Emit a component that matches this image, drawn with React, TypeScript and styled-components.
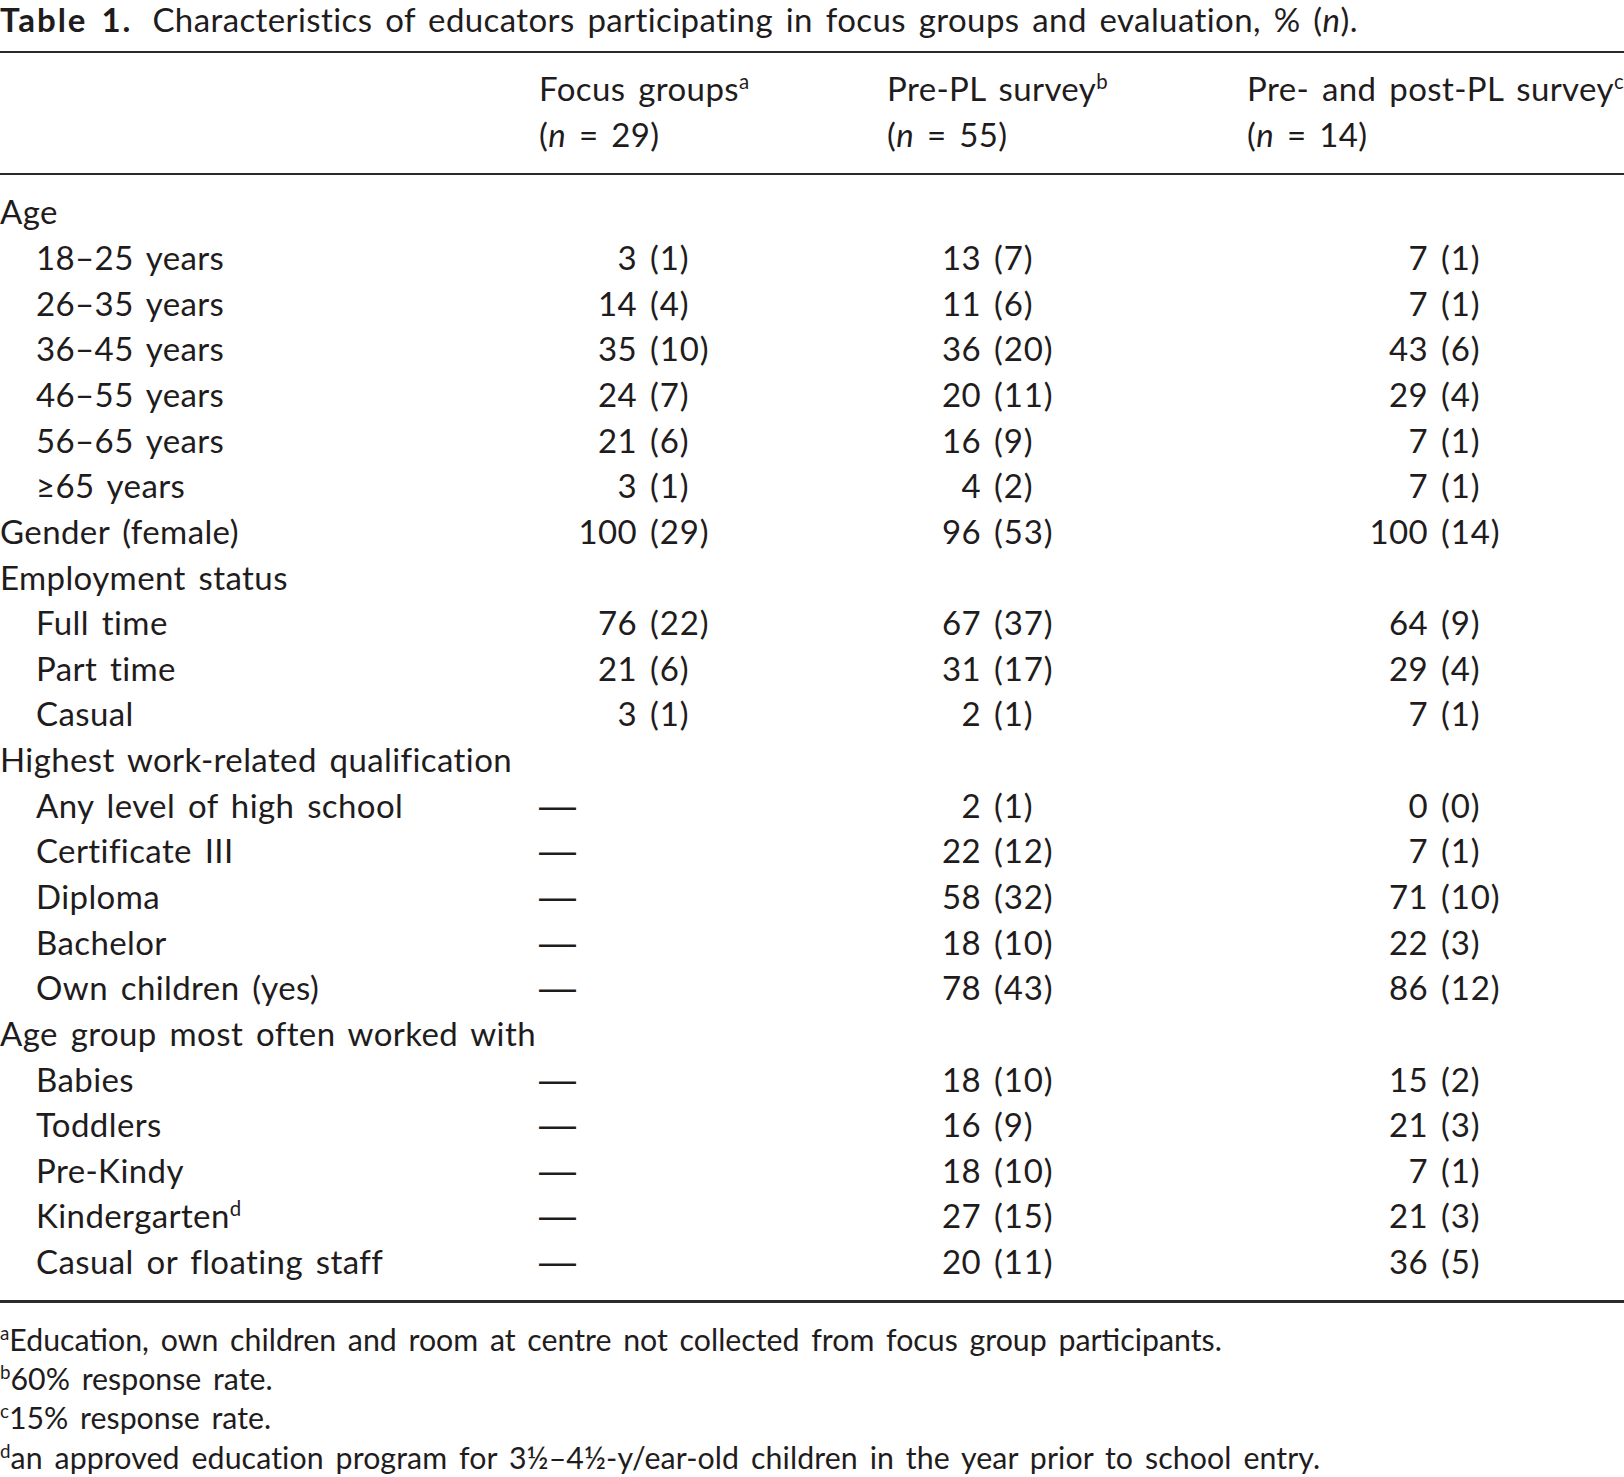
import React from "react";
import styled, { createGlobalStyle } from "styled-components";

const GlobalStyle = createGlobalStyle`
  html, body { margin: 0; padding: 0; background: #ffffff; }
  body {
    font-family: "Lato", "Noto Sans", sans-serif;
    color: #1f1c1d;
    -webkit-font-smoothing: antialiased;
  }
`;

const Page = styled.div`
  width: 1624px;
  font-size: 33px;
  letter-spacing: 0.4px;
  word-spacing: 0.12em;
`;

const Caption = styled.div`
  height: 39.6px;
  line-height: 39.6px;
  white-space: nowrap;
  margin-bottom: 11.1px;
`;

const CaptionLabel = styled.span`
  font-weight: 700;
  letter-spacing: 2px;
  margin-right: 20px;
`;

const Em = styled.i`
  font-style: italic;
`;

const Sup = styled.sup`
  font-size: 0.62em;
  vertical-align: 0.58em;
  line-height: 0;
  word-spacing: 0;
  letter-spacing: 0;
`;

const cols = "539px 348px 360px 1fr";

const Header = styled.div`
  display: grid;
  grid-template-columns: ${cols};
  border-top: 2px solid #2a2a2a;
  border-bottom: 2px solid #2a2a2a;
  padding: 13.4px 0 15.6px;
  line-height: 45.65px;
`;

const HeadCell = styled.div`
  white-space: nowrap;
`;

const Body = styled.div`
  padding: 14.4px 0 15.5px;
  border-bottom: 3px solid #2a2a2a;
`;

const Row = styled.div`
  display: grid;
  grid-template-columns: ${cols};
  height: 45.65px;
  line-height: 45.65px;
  white-space: nowrap;
`;

const Label = styled.div<{ $indent: boolean }>`
  padding-left: ${(p) => (p.$indent ? 36 : 0)}px;
`;

const Value = styled.div<{ $num: number }>`
  display: grid;
  grid-template-columns: ${(p) => p.$num}px auto;
  column-gap: 13px;
  justify-content: start;
`;

const Num = styled.span`
  text-align: right;
`;

const Paren = styled.span`
  letter-spacing: 0.9px;
`;

const Dash = styled.div`
  font-family: "Liberation Sans", "DejaVu Sans", sans-serif;
  font-size: 37px;
  letter-spacing: 0;
`;

const Notes = styled.div`
  padding-top: 16.6px;
  font-size: 30.3px;
  letter-spacing: 0;
  line-height: 39.3px;
`;

const Note = styled.div`
  white-space: nowrap;
`;

const NoteWide = styled(Note)`
  letter-spacing: 0.1px;
`;

type Cell = [string, string] | null;
type RowData = { label: string; indent: boolean; sup?: string; v?: [Cell, Cell, Cell] };

const rows: RowData[] = [
  { label: "Age", indent: false },
  { label: "18–25 years", indent: true, v: [["3", "1"], ["13", "7"], ["7", "1"]] },
  { label: "26–35 years", indent: true, v: [["14", "4"], ["11", "6"], ["7", "1"]] },
  { label: "36–45 years", indent: true, v: [["35", "10"], ["36", "20"], ["43", "6"]] },
  { label: "46–55 years", indent: true, v: [["24", "7"], ["20", "11"], ["29", "4"]] },
  { label: "56–65 years", indent: true, v: [["21", "6"], ["16", "9"], ["7", "1"]] },
  { label: "≥65 years", indent: true, v: [["3", "1"], ["4", "2"], ["7", "1"]] },
  { label: "Gender (female)", indent: false, v: [["100", "29"], ["96", "53"], ["100", "14"]] },
  { label: "Employment status", indent: false },
  { label: "Full time", indent: true, v: [["76", "22"], ["67", "37"], ["64", "9"]] },
  { label: "Part time", indent: true, v: [["21", "6"], ["31", "17"], ["29", "4"]] },
  { label: "Casual", indent: true, v: [["3", "1"], ["2", "1"], ["7", "1"]] },
  { label: "Highest work-related qualification", indent: false },
  { label: "Any level of high school", indent: true, v: [null, ["2", "1"], ["0", "0"]] },
  { label: "Certificate III", indent: true, v: [null, ["22", "12"], ["7", "1"]] },
  { label: "Diploma", indent: true, v: [null, ["58", "32"], ["71", "10"]] },
  { label: "Bachelor", indent: true, v: [null, ["18", "10"], ["22", "3"]] },
  { label: "Own children (yes)", indent: true, v: [null, ["78", "43"], ["86", "12"]] },
  { label: "Age group most often worked with", indent: false },
  { label: "Babies", indent: true, v: [null, ["18", "10"], ["15", "2"]] },
  { label: "Toddlers", indent: true, v: [null, ["16", "9"], ["21", "3"]] },
  { label: "Pre-Kindy", indent: true, v: [null, ["18", "10"], ["7", "1"]] },
  { label: "Kindergarten", sup: "d", indent: true, v: [null, ["27", "15"], ["21", "3"]] },
  { label: "Casual or floating staff", indent: true, v: [null, ["20", "11"], ["36", "5"]] },
];

const numWidths = [98, 94, 181];

function ValueCell({ cell, idx }: { cell: Cell; idx: number }) {
  if (!cell) return <Dash>—</Dash>;
  return (
    <Value $num={numWidths[idx]}>
      <Num>{cell[0]}</Num>
      <Paren>({cell[1]})</Paren>
    </Value>
  );
}

export default function App() {
  return (
    <>
      <GlobalStyle />
      <Page>
        <Caption>
          <CaptionLabel>Table 1.</CaptionLabel>
          Characteristics of educators participating in focus groups and evaluation, % (<Em>n</Em>).
        </Caption>
        <Header>
          <HeadCell />
          <HeadCell>
            Focus groups<Sup>a</Sup>
            <br />(<Em>n</Em> = 29)
          </HeadCell>
          <HeadCell>
            Pre-PL survey<Sup>b</Sup>
            <br />(<Em>n</Em> = 55)
          </HeadCell>
          <HeadCell>
            Pre- and post-PL survey<Sup>c</Sup>
            <br />(<Em>n</Em> = 14)
          </HeadCell>
        </Header>
        <Body>
          {rows.map((r, i) => (
            <Row key={i}>
              <Label $indent={r.indent}>
                {r.label}
                {r.sup && <Sup>{r.sup}</Sup>}
              </Label>
              {r.v ? (
                r.v.map((c, j) => <ValueCell key={j} cell={c} idx={j} />)
              ) : (
                <>
                  <div />
                  <div />
                  <div />
                </>
              )}
            </Row>
          ))}
        </Body>
        <Notes>
          <Note>
            <Sup>a</Sup>Education, own children and room at centre not collected from focus group participants.
          </Note>
          <Note>
            <Sup>b</Sup>60% response rate.
          </Note>
          <Note>
            <Sup>c</Sup>15% response rate.
          </Note>
          <NoteWide>
            <Sup>d</Sup>an approved education program for 3½–4½-y/ear-old children in the year prior to school entry.
          </NoteWide>
        </Notes>
      </Page>
    </>
  );
}
